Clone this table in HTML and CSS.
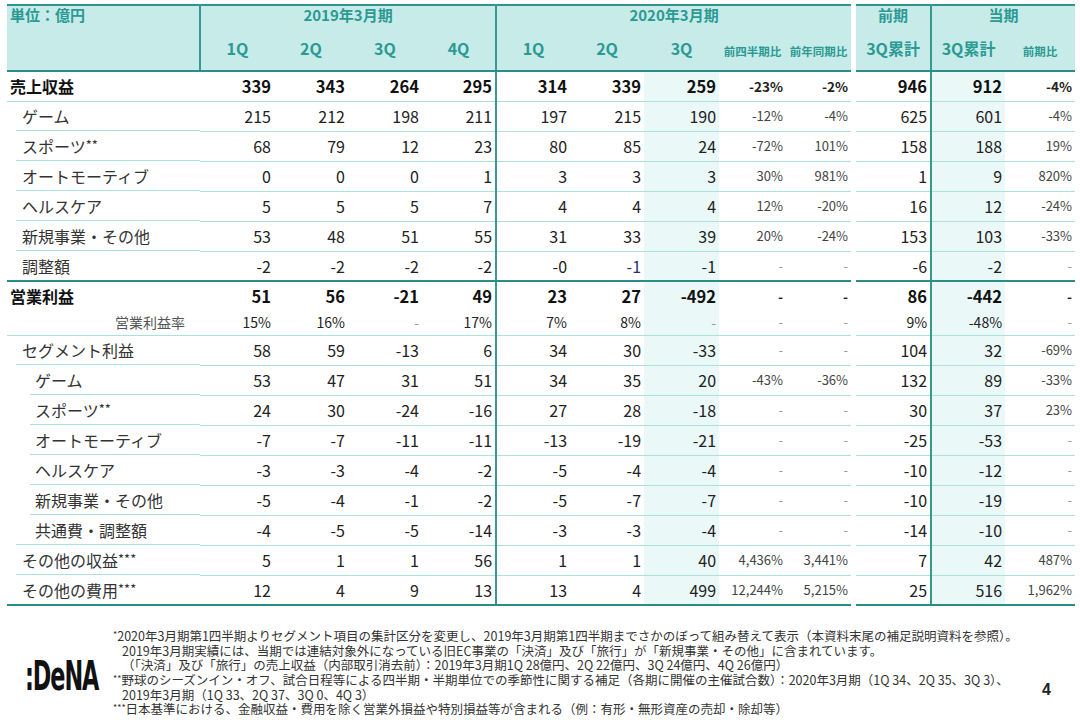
FILE: index.html
```html
<!DOCTYPE html>
<html lang="ja">
<head>
<meta charset="utf-8">
<title>セグメント別業績</title>
<link rel="stylesheet" href="styles.css">
</head>
<body>
<div class="page">
<table class="fin">
<colgroup>
<col class="c-lab"><col class="c-q"><col class="c-q"><col class="c-q"><col class="c-q">
<col class="c-q"><col class="c-q"><col class="c-q3"><col class="c-p1"><col class="c-p2">
<col class="c-sp"><col class="c-q3"><col class="c-q"><col class="c-p3">
</colgroup>
<thead>
<tr class="h1">
<th class="unit vl" rowspan="2">単位：億円</th>
<th class="vl" colspan="4">2019年3月期</th>
<th colspan="5">2020年3月期</th>
<th class="sp"></th>
<th class="vl">前期</th>
<th colspan="2">当期</th>
</tr>
<tr class="h2">
<th>1Q</th><th>2Q</th><th>3Q</th><th class="vl">4Q</th>
<th>1Q</th><th>2Q</th><th>3Q</th><th class="sm">前四半期比</th><th class="sm">前年同期比</th>
<th class="sp"></th>
<th class="vl">3Q累計</th><th>3Q累計</th><th class="sm">前期比</th>
</tr>
</thead>
<tbody>
<tr class="b">
<td class="lab l0">売上収益</td><td>339</td><td>343</td><td>264</td><td class="vl">295</td>
<td>314</td><td>339</td><td class="hl">259</td><td class="p">-23%</td><td class="p">-2%</td>
<td class="sp"></td><td class="vl">946</td><td class="hl">912</td><td class="p">-4%</td>
</tr>
<tr>
<td class="lab l1 ln1">ゲーム</td><td>215</td><td>212</td><td>198</td><td class="vl">211</td>
<td>197</td><td>215</td><td class="hl">190</td><td class="p">-12%</td><td class="p">-4%</td>
<td class="sp"></td><td class="vl">625</td><td class="hl">601</td><td class="p">-4%</td>
</tr>
<tr>
<td class="lab l1 ln1">スポーツ<span class="ast">**</span></td><td>68</td><td>79</td><td>12</td><td class="vl">23</td>
<td>80</td><td>85</td><td class="hl">24</td><td class="p">-72%</td><td class="p">101%</td>
<td class="sp"></td><td class="vl">158</td><td class="hl">188</td><td class="p">19%</td>
</tr>
<tr>
<td class="lab l1 ln1">オートモーティブ</td><td>0</td><td>0</td><td>0</td><td class="vl">1</td>
<td>3</td><td>3</td><td class="hl">3</td><td class="p">30%</td><td class="p">981%</td>
<td class="sp"></td><td class="vl">1</td><td class="hl">9</td><td class="p">820%</td>
</tr>
<tr>
<td class="lab l1 ln1">ヘルスケア</td><td>5</td><td>5</td><td>5</td><td class="vl">7</td>
<td>4</td><td>4</td><td class="hl">4</td><td class="p">12%</td><td class="p">-20%</td>
<td class="sp"></td><td class="vl">16</td><td class="hl">12</td><td class="p">-24%</td>
</tr>
<tr>
<td class="lab l1 ln1">新規事業・その他</td><td>53</td><td>48</td><td>51</td><td class="vl">55</td>
<td>31</td><td>33</td><td class="hl">39</td><td class="p">20%</td><td class="p">-24%</td>
<td class="sp"></td><td class="vl">153</td><td class="hl">103</td><td class="p">-33%</td>
</tr>
<tr class="sec">
<td class="lab l1">調整額</td><td>-2</td><td>-2</td><td>-2</td><td class="vl">-2</td>
<td>-0</td><td class="nv">-1</td><td class="hl">-1</td><td class="p d">-</td><td class="p d">-</td>
<td class="sp"></td><td class="vl">-6</td><td class="hl">-2</td><td class="p d">-</td>
</tr>
<tr class="b nob r28">
<td class="lab l0">営業利益</td><td>51</td><td>56</td><td>-21</td><td class="vl">49</td>
<td>23</td><td>27</td><td class="hl">-492</td><td class="p">-</td><td class="p">-</td>
<td class="sp"></td><td class="vl">86</td><td class="hl">-442</td><td class="p">-</td>
</tr>
<tr class="rate r26">
<td class="lab rl">営業利益率</td><td>15%</td><td>16%</td><td class="d">-</td><td class="vl">17%</td>
<td>7%</td><td>8%</td><td class="hl d">-</td><td class="p d">-</td><td class="p d">-</td>
<td class="sp"></td><td class="vl">9%</td><td class="hl">-48%</td><td class="p d">-</td>
</tr>
<tr>
<td class="lab l1 ln1">セグメント利益</td><td>58</td><td>59</td><td>-13</td><td class="vl">6</td>
<td>34</td><td>30</td><td class="hl">-33</td><td class="p d">-</td><td class="p d">-</td>
<td class="sp"></td><td class="vl">104</td><td class="hl">32</td><td class="p">-69%</td>
</tr>
<tr>
<td class="lab l2 ln2">ゲーム</td><td>53</td><td>47</td><td>31</td><td class="vl">51</td>
<td>34</td><td>35</td><td class="hl">20</td><td class="p">-43%</td><td class="p">-36%</td>
<td class="sp"></td><td class="vl">132</td><td class="hl">89</td><td class="p">-33%</td>
</tr>
<tr>
<td class="lab l2 ln2">スポーツ<span class="ast">**</span></td><td>24</td><td>30</td><td>-24</td><td class="vl">-16</td>
<td>27</td><td>28</td><td class="hl">-18</td><td class="p d">-</td><td class="p d">-</td>
<td class="sp"></td><td class="vl">30</td><td class="hl">37</td><td class="p">23%</td>
</tr>
<tr>
<td class="lab l2 ln2">オートモーティブ</td><td>-7</td><td>-7</td><td>-11</td><td class="vl">-11</td>
<td>-13</td><td>-19</td><td class="hl">-21</td><td class="p d">-</td><td class="p d">-</td>
<td class="sp"></td><td class="vl">-25</td><td class="hl">-53</td><td class="p d">-</td>
</tr>
<tr>
<td class="lab l2 ln2">ヘルスケア</td><td>-3</td><td>-3</td><td>-4</td><td class="vl">-2</td>
<td>-5</td><td>-4</td><td class="hl">-4</td><td class="p d">-</td><td class="p d">-</td>
<td class="sp"></td><td class="vl">-10</td><td class="hl">-12</td><td class="p d">-</td>
</tr>
<tr>
<td class="lab l2 ln2">新規事業・その他</td><td>-5</td><td>-4</td><td>-1</td><td class="vl">-2</td>
<td>-5</td><td>-7</td><td class="hl">-7</td><td class="p d">-</td><td class="p d">-</td>
<td class="sp"></td><td class="vl">-10</td><td class="hl">-19</td><td class="p d">-</td>
</tr>
<tr>
<td class="lab l2 ln1">共通費・調整額</td><td>-4</td><td>-5</td><td>-5</td><td class="vl">-14</td>
<td>-3</td><td>-3</td><td class="hl">-4</td><td class="p d">-</td><td class="p d">-</td>
<td class="sp"></td><td class="vl">-14</td><td class="hl">-10</td><td class="p d">-</td>
</tr>
<tr>
<td class="lab l1 ln1">その他の収益<span class="ast">***</span></td><td>5</td><td>1</td><td>1</td><td class="vl">56</td>
<td>1</td><td>1</td><td class="hl">40</td><td class="p">4,436%</td><td class="p">3,441%</td>
<td class="sp"></td><td class="vl">7</td><td class="hl">42</td><td class="p">487%</td>
</tr>
<tr class="sec">
<td class="lab l1">その他の費用<span class="ast">***</span></td><td>12</td><td>4</td><td>9</td><td class="vl">13</td>
<td>13</td><td>4</td><td class="hl">499</td><td class="p">12,244%</td><td class="p">5,215%</td>
<td class="sp"></td><td class="vl">25</td><td class="hl">516</td><td class="p">1,962%</td>
</tr>
</tbody>
</table>

<div class="foot">
<div class="logo"><span class="logo-text">:DeNA</span></div>
<div class="notes">
<p><span class="ast">*</span>2020年3月期第1四半期よりセグメント項目の集計区分を変更し、2019年3月期第1四半期までさかのぼって組み替えて表示（本資料末尾の補足説明資料を参照）。</p>
<p class="ind">2019年3月期実績には、当期では連結対象外になっている旧EC事業の「決済」及び「旅行」が「新規事業・その他」に含まれています。</p>
<p class="ind">（「決済」及び「旅行」の売上収益（内部取引消去前）：2019年3月期1Q 28億円、2Q 22億円、3Q 24億円、4Q 26億円）</p>
<p><span class="ast">**</span>野球のシーズンイン・オフ、試合日程等による四半期・半期単位での季節性に関する補足（各期に開催の主催試合数）：2020年3月期（1Q 34、2Q 35、3Q 3）、</p>
<p class="ind">2019年3月期（1Q 33、2Q 37、3Q 0、4Q 3）</p>
<p><span class="ast">***</span>日本基準における、金融収益・費用を除く営業外損益や特別損益等が含まれる（例：有形・無形資産の売却・除却等）</p>
</div>
<div class="pnum">4</div>
</div>
</div>
</body>
</html>
```

FILE: styles.css
```css
html, body {
  margin: 0;
  padding: 0;
  background: #ffffff;
}

body {
  font-family: "Noto Sans CJK JP", "Noto Sans", sans-serif;
  color: #222222;
}

.page {
  width: 1080px;
  height: 720px;
  box-sizing: border-box;
  padding: 4px 5px 0 7px;
  overflow: hidden;
}

/* ---------- table ---------- */
.fin {
  border-collapse: collapse;
  table-layout: fixed;
  width: 1068px;
}

.c-lab { width: 193px; }
.c-q { width: 74px; }
.c-q3 { width: 75px; }
.c-p1 { width: 67px; }
.c-p2 { width: 65px; }
.c-sp { width: 5px; }
.c-p3 { width: 70px; }

.fin th,
.fin td {
  box-sizing: border-box;
}

.fin th {
  background: #c7ebe9;
  color: #2b9a93;
  font-weight: 700;
  padding: 0;
  white-space: nowrap;
  vertical-align: top;
  line-height: 20px;
}

.fin .h1 th {
  height: 32px;
  font-size: 15px;
  line-height: 18px;
  padding-top: 0;
  border-top: 2px solid #2f948e;
}

.fin .h2 th {
  height: 34px;
  font-size: 16px;
  padding-top: 1px;
  border-bottom: 2px solid #2b8d87;
}

.fin .h2 th.sm {
  font-size: 11.5px;
  padding-top: 4px;
}

.fin th.unit {
  text-align: left;
  padding-left: 3px;
  font-size: 15px;
  border-bottom: 2px solid #2b8d87;
}

.fin th.sp,
.fin td.sp {
  background: #ffffff;
  border: none;
}

.fin td {
  height: 30px;
  padding: 0 3px 0 0;
  text-align: right;
  font-size: 16px;
  line-height: 20px;
  white-space: nowrap;
  border-bottom: 1px solid #ade0dc;
  color: #222222;
}

.fin .vl {
  border-right: 2px solid #3a9892;
}

.fin td.hl {
  background: #eaf8f8;
}

.fin td.p {
  font-size: 13px;
  color: #444444;
}

.fin td.d {
  color: #9a9a9a;
}

.fin td.nv {
  color: #2b2f6a;
}

/* label column */
.fin td.lab {
  text-align: left;
  color: #333333;
}

.fin td.l0 { padding-left: 3px; color: #111111; }
.fin td.l1 { padding-left: 15px; }
.fin td.l2 { padding-left: 28px; }

.fin td.ln1 {
  border-bottom: none;
  background: linear-gradient(#ade0dc, #ade0dc) no-repeat right bottom / calc(100% - 9px) 1px;
}

.fin td.ln2 {
  border-bottom: none;
  background: linear-gradient(#ade0dc, #ade0dc) no-repeat right bottom / calc(100% - 23px) 1px;
}

.fin td.rl {
  text-align: right;
  padding-right: 15px;
  font-size: 14px;
  color: #555555;
}

.fin .rate td { font-size: 14px; }
.fin .rate td.p { font-size: 13px; }

.fin tr.b td {
  font-weight: 700;
  font-size: 16.5px;
  color: #111111;
}

.fin tr.b td.lab { font-size: 16px; }

.fin tr.b td.p {
  font-size: 13.5px;
  color: #222222;
}

.fin tr.sec td {
  border-bottom: 2px solid #2b8d87;
}

.fin tr.sec td.sp { border: none; }

.fin tr.nob td { border-bottom: none; }

.fin tr.r28 td { height: 28px; }
.fin tr.r26 td { height: 26px; }

.ast {
  font-size: 13px;
  line-height: 0;
  vertical-align: 3px;
  letter-spacing: 0;
}

/* ---------- footer ---------- */
.foot {
  display: flex;
  align-items: flex-start;
  margin-top: 23px;
}

.logo {
  width: 106px;
  flex: none;
  padding-top: 27px;
  padding-left: 18px;
  box-sizing: border-box;
}

.logo-text {
  display: inline-block;
  font-family: "DejaVu Sans", sans-serif;
  font-weight: 700;
  font-size: 40px;
  line-height: 40px;
  letter-spacing: -2px;
  color: #111111;
  transform: scaleX(0.56);
  transform-origin: left center;
}

.notes {
  flex: none;
  width: 910px;
  font-size: 12.5px;
  line-height: 14.7px;
  color: #333333;
}

.notes p {
  margin: 0;
  height: 14.7px;
  white-space: nowrap;
}

.notes p.ind {
  padding-left: 9px;
}

.notes .ast {
  font-size: 9px;
  line-height: 0;
  vertical-align: 3px;
}

.pnum {
  margin-left: 19px;
  padding-top: 52px;
  font-family: "Liberation Sans", sans-serif;
  font-weight: 700;
  font-size: 16px;
  color: #222222;
}
```
